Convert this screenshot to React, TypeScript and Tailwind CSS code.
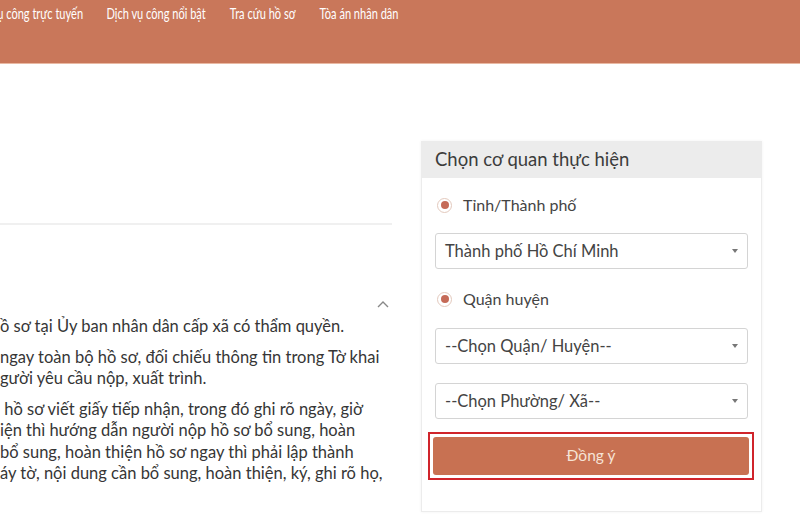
import React from "react";

const font = { fontFamily: "Lato, 'Noto Sans', sans-serif" };

function Radio({ label }: { label: string }) {
  return (
    <div className="flex items-center h-[24px]">
      <span className="w-[15px] h-[15px] rounded-full border border-[#e3c9bd] bg-white flex items-center justify-center">
        <span className="w-[8px] h-[8px] rounded-full bg-[#c56a57]" />
      </span>
      <span className="ml-[11px] text-[16px] text-[#444]">{label}</span>
    </div>
  );
}

function Select({ value }: { value: string }) {
  return (
    <div className="h-[36px] border border-[#d4d4d4] rounded-[3px] bg-white flex items-center justify-between pl-[9px] pr-[9px]">
      <span className="text-[16.5px] text-[#444]">{value}</span>
      <span className="w-0 h-0 border-l-[3.5px] border-r-[3.5px] border-t-[4px] border-l-transparent border-r-transparent border-t-[#777]" />
    </div>
  );
}

const lines1 = ["ồ sơ tại Ủy ban nhân dân cấp xã có thẩm quyền."];
const lines2 = ["ngay toàn bộ hồ sơ, đối chiếu thông tin trong Tờ khai", "gười yêu cầu nộp, xuất trình."];
const lines3 = [
  " hồ sơ viết giấy tiếp nhận, trong đó ghi rõ ngày, giờ",
  "iện thì hướng dẫn người nộp hồ sơ bổ sung, hoàn",
  "bổ sung, hoàn thiện hồ sơ ngay thì phải lập thành",
  "áy tờ, nội dung cần bổ sung, hoàn thiện, ký, ghi rõ họ,",
];

export default function App() {
  return (
    <div className="w-[800px] h-[517px] bg-white overflow-hidden" style={font}>
      <div className="h-[64px] bg-[#c9775a] border-b border-[#e9b9a3] pt-[1px] overflow-hidden">
        <div className="flex items-start text-white text-[16px] whitespace-nowrap origin-left scale-x-[0.69] w-[1100px]">
          <span className="ml-[-4px]">ụ công trực tuyến</span>
          <span className="ml-[34px]">Dịch vụ công nổi bật</span>
          <span className="ml-[35px]">Tra cứu hồ sơ</span>
          <span className="ml-[35px]">Tòa án nhân dân</span>
        </div>
      </div>
      <div className="flex">
        <div className="w-[392px]">
          <div className="mt-[159px] h-[2px] bg-[#f0f0f0]" />
          <div className="flex justify-end pr-[3px] mt-[75px]">
            <svg width="12" height="8" viewBox="0 0 12 8" fill="none">
              <path d="M1 7 L6 2 L11 7" stroke="#888" strokeWidth="1.4" />
            </svg>
          </div>
          <div className="mt-[8px] text-[16.5px] leading-[21.5px] text-[#363636] whitespace-nowrap">
            {lines1.map((l) => (
              <div key={l}>{l}</div>
            ))}
            <div className="mt-[9px]">
              {lines2.map((l) => (
                <div key={l}>{l}</div>
              ))}
            </div>
            <div className="mt-[9px]">
              {lines3.map((l) => (
                <div key={l} style={{ whiteSpace: "pre" }}>{l}</div>
              ))}
            </div>
          </div>
        </div>
        <div className="ml-[29px] mt-[77px] w-[341px] h-[371px] border border-[#ececec] shadow-[0_0_3px_rgba(0,0,0,0.06)] bg-white">
          <div className="h-[36px] bg-[#ececec] flex items-center pl-[13px] text-[18.5px] text-[#3c3c3c]">
            Chọn cơ quan thực hiện
          </div>
          <div className="px-[13px]">
            <div className="mt-[15px] ml-[2px]">
              <Radio label="Tỉnh/Thành phố" />
            </div>
            <div className="mt-[16px]">
              <Select value="Thành phố Hồ Chí Minh" />
            </div>
            <div className="mt-[18px] ml-[2px]">
              <Radio label="Quận huyện" />
            </div>
            <div className="mt-[17px]">
              <Select value="--Chọn Quận/ Huyện--" />
            </div>
            <div className="mt-[19px]">
              <Select value="--Chọn Phường/ Xã--" />
            </div>
            <div className="mt-[13px] ml-[-7px] mr-[-6px] border-[2px] border-[#d0242b] p-[3px]">
              <div className="h-[38px] rounded-[3px] bg-[#c87152] flex items-center justify-center text-[15.5px] text-[#f6e3d6]">
                Đồng ý
              </div>
            </div>
          </div>
        </div>
      </div>
    </div>
  );
}
